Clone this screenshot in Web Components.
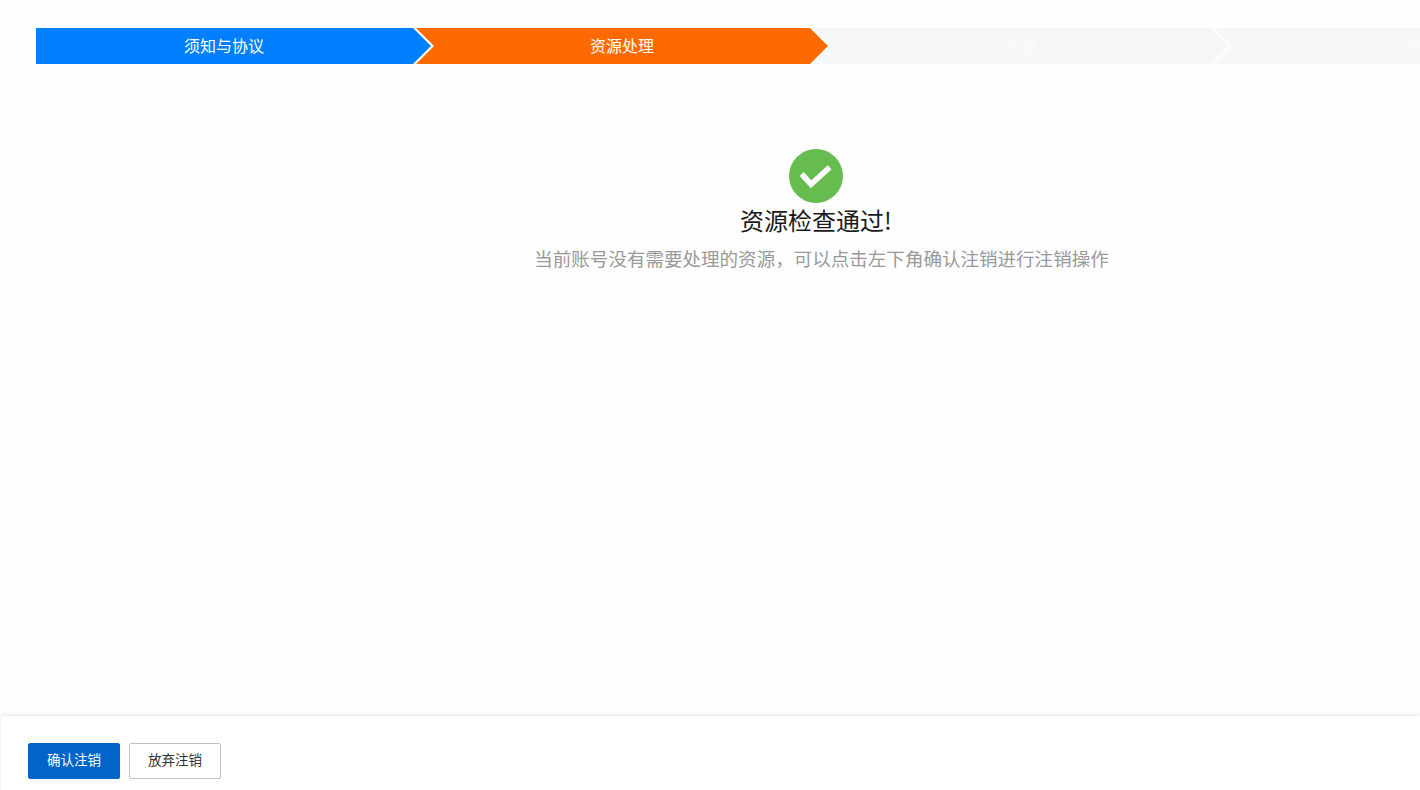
<!DOCTYPE html>
<html lang="zh-CN">
<head>
<meta charset="utf-8">
<title>资源处理</title>
<style>
  html,body{margin:0;height:100%;background:#fefefe;overflow:hidden}
  body{font-family:"Noto Sans CJK SC","Liberation Sans",sans-serif;display:flex;flex-direction:column}
</style>
</head>
<body>
<step-bar>
  <step-item state="done" first>须知与协议</step-item>
  <step-item state="active">资源处理</step-item>
  <step-item wide>审查</step-item>
  <step-item>注销成功</step-item>
</step-bar>
<result-panel heading="资源检查通过!" note="当前账号没有需要处理的资源，可以点击左下角确认注销进行注销操作"></result-panel>
<action-footer>
  <app-button kind="primary">确认注销</app-button>
  <app-button>放弃注销</app-button>
</action-footer>

<script>
// <step-bar> — row of overlapping chevrons, clipped at the window edge
class StepBar extends HTMLElement {
  constructor() {
    super();
    this.attachShadow({ mode: "open" });
    this.shadowRoot.innerHTML = `
      <style>
        :host{display:flex;flex:none;padding:28px 0 0 36px;overflow:hidden}
      </style>
      <slot></slot>`;
  }
}

class StepItem extends HTMLElement {
  constructor() {
    super();
    this.attachShadow({ mode: "open" });
    this.shadowRoot.innerHTML = `
      <style>
        :host{
          display:flex;flex:none;align-items:center;justify-content:center;box-sizing:border-box;
          width:412px;height:36px;margin-left:-15px;padding-bottom:2px;
          background:#f6f7f9;color:#fafbfc;font-size:16px;
          clip-path:polygon(0 0,calc(100% - 18px) 0,100% 50%,calc(100% - 18px) 100%,0 100%,18px 50%);
        }
        :host([wide]){width:416px}
        :host([state="done"]){background:#0080ff;color:#fff}
        :host([state="active"]){background:#ff6a00;color:#fff}
        :host([first]){
          width:395px;margin-left:0;padding-right:19px;
          clip-path:polygon(0 0,calc(100% - 18px) 0,100% 50%,calc(100% - 18px) 100%,0 100%);
        }
      </style>
      <slot></slot>`;
  }
}

// centred result: green tick, heading, explanation
class ResultPanel extends HTMLElement {
  constructor() {
    super();
    this.attachShadow({ mode: "open" });
    this.shadowRoot.innerHTML = `
      <style>
        :host{display:flex;flex:1;flex-direction:column;align-items:center;padding:85px 0 0 212px}
        svg{display:block;width:54px;height:54px}
        h2{margin:-1px 0 0;font-size:24px;line-height:36px;font-weight:400;color:#1a1a1a}
        p{margin:6px 0 0;padding-left:11px;font-size:18.55px;line-height:28px;color:#999}
      </style>
      <svg viewBox="0 0 54 54" aria-hidden="true">
        <circle cx="27" cy="27" r="27" fill="#67bc4f"/>
        <path d="M12.7 25 22 35.3 40.7 18.3" fill="none" stroke="#fff" stroke-width="5.6"/>
      </svg>
      <h2></h2>
      <p></p>`;
  }

  connectedCallback() {
    this.shadowRoot.querySelector("h2").textContent = this.getAttribute("heading");
    this.shadowRoot.querySelector("p").textContent = this.getAttribute("note");
  }
}

class ActionFooter extends HTMLElement {
  constructor() {
    super();
    this.attachShadow({ mode: "open" });
    this.shadowRoot.innerHTML = `
      <style>
        :host{
          display:flex;flex:none;gap:9px;height:74px;box-sizing:border-box;padding:27px 0 0 27px;margin-left:1px;
          background:#fff;box-shadow:0 -1px 4px rgba(0,0,0,.1);
        }
      </style>
      <slot></slot>`;
  }
}

class AppButton extends HTMLElement {
  constructor() {
    super();
    this.attachShadow({ mode: "open" });
    this.shadowRoot.innerHTML = `
      <style>
        :host{
          display:flex;align-items:center;justify-content:center;box-sizing:border-box;
          width:92px;height:36px;border:1px solid #c0c0c0;border-radius:2px;padding-bottom:4px;
          background:#fff;color:#333;font-size:13.5px;cursor:pointer;
        }
        :host([kind="primary"]){background:#0064c8;border-color:#0064c8;color:#fff}
      </style>
      <slot></slot>`;
  }
}

customElements.define("step-bar", StepBar);
customElements.define("step-item", StepItem);
customElements.define("result-panel", ResultPanel);
customElements.define("action-footer", ActionFooter);
customElements.define("app-button", AppButton);
</script>
</body>
</html>
